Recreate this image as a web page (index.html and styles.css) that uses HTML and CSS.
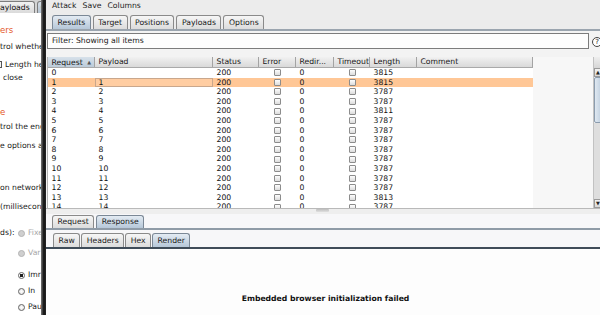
FILE: index.html
```html
<!DOCTYPE html>
<html lang="en">
<head>
    <meta charset="UTF-8">
    <meta name="viewport" content="width=device-width, initial-scale=1.0">
    <title>Intruder attack</title>
    <link rel="stylesheet" href="styles.css">
</head>
<body>
    <div class="desk">
        <div class="back">
            <div class="back-tabs">
                <span class="btab">ayloads</span>
                <span class="btab btab-blue">C</span>
            </div>
            <div class="back-body">
                <div class="bl sect first">ers</div>
                <div class="bl g7">trol whethe</div>
                <div class="bl g8"><i class="bcb"></i>Length hea</div>
                <div class="bl g3 in">close</div>
                <div class="bl sect g24">e</div>
                <div class="bl g5">trol the eng</div>
                <div class="bl g9">e options a</div>
                <div class="bl g32">on network</div>
                <div class="bl g9">(millisecon</div>
                <div class="bl g16 opt"><span class="lbl">ds):</span><i class="rad off"></i><span class="dim">Fixe</span></div>
                <div class="bl g10 opt"><span class="lbl"></span><i class="rad off"></i><span class="dim">Var</span></div>
                <div class="bl g12 opt"><span class="lbl"></span><i class="rad on"></i>Imr</div>
                <div class="bl g6 opt"><span class="lbl"></span><i class="rad"></i>In</div>
                <div class="bl g6 opt"><span class="lbl"></span><i class="rad"></i>Pau</div>
            </div>
        </div>
        <div class="edge"></div>

        <div class="win">
            <div class="menu">
                <span>Attack</span>
                <span>Save</span>
                <span>Columns</span>
            </div>

            <div class="tabs tabs-top">
                <span class="tab active">Results</span>
                <span class="tab">Target</span>
                <span class="tab">Positions</span>
                <span class="tab">Payloads</span>
                <span class="tab">Options</span>
            </div>

            <div class="filter-row">
                <div class="filter">Filter: Showing all items</div>
                <span class="help">?</span>
            </div>

            <div class="grid-wrap">
                <div class="table">
                    <div class="row head">
                        <span class="sorted">Request <b class="arrow">&#9650;</b></span>
                        <span>Payload</span>
                        <span>Status</span>
                        <span>Error</span>
                        <span>Redir...</span>
                        <span>Timeout</span>
                        <span>Length</span>
                        <span>Comment</span>
                    </div>
                    <div class="row"><span>0</span><span></span><span>200</span><span class="c"><i class="cb"></i></span><span>0</span><span class="c"><i class="cb"></i></span><span>3815</span><span></span></div>
                    <div class="row picked"><span>1</span><span class="focus">1</span><span>200</span><span class="c"><i class="cb"></i></span><span>0</span><span class="c"><i class="cb"></i></span><span>3815</span><span></span></div>
                    <div class="row"><span>2</span><span>2</span><span>200</span><span class="c"><i class="cb"></i></span><span>0</span><span class="c"><i class="cb"></i></span><span>3787</span><span></span></div>
                    <div class="row"><span>3</span><span>3</span><span>200</span><span class="c"><i class="cb"></i></span><span>0</span><span class="c"><i class="cb"></i></span><span>3787</span><span></span></div>
                    <div class="row"><span>4</span><span>4</span><span>200</span><span class="c"><i class="cb"></i></span><span>0</span><span class="c"><i class="cb"></i></span><span>3811</span><span></span></div>
                    <div class="row"><span>5</span><span>5</span><span>200</span><span class="c"><i class="cb"></i></span><span>0</span><span class="c"><i class="cb"></i></span><span>3787</span><span></span></div>
                    <div class="row"><span>6</span><span>6</span><span>200</span><span class="c"><i class="cb"></i></span><span>0</span><span class="c"><i class="cb"></i></span><span>3787</span><span></span></div>
                    <div class="row"><span>7</span><span>7</span><span>200</span><span class="c"><i class="cb"></i></span><span>0</span><span class="c"><i class="cb"></i></span><span>3787</span><span></span></div>
                    <div class="row"><span>8</span><span>8</span><span>200</span><span class="c"><i class="cb"></i></span><span>0</span><span class="c"><i class="cb"></i></span><span>3787</span><span></span></div>
                    <div class="row"><span>9</span><span>9</span><span>200</span><span class="c"><i class="cb"></i></span><span>0</span><span class="c"><i class="cb"></i></span><span>3787</span><span></span></div>
                    <div class="row"><span>10</span><span>10</span><span>200</span><span class="c"><i class="cb"></i></span><span>0</span><span class="c"><i class="cb"></i></span><span>3787</span><span></span></div>
                    <div class="row"><span>11</span><span>11</span><span>200</span><span class="c"><i class="cb"></i></span><span>0</span><span class="c"><i class="cb"></i></span><span>3787</span><span></span></div>
                    <div class="row"><span>12</span><span>12</span><span>200</span><span class="c"><i class="cb"></i></span><span>0</span><span class="c"><i class="cb"></i></span><span>3787</span><span></span></div>
                    <div class="row"><span>13</span><span>13</span><span>200</span><span class="c"><i class="cb"></i></span><span>0</span><span class="c"><i class="cb"></i></span><span>3813</span><span></span></div>
                    <div class="row"><span>14</span><span>14</span><span>200</span><span class="c"><i class="cb"></i></span><span>0</span><span class="c"><i class="cb"></i></span><span>3787</span><span></span></div>
                </div>
                <div class="blank"></div>
                <div class="vscroll">
                    <div class="sb-corner"></div>
                    <div class="sb-btn">&#9650;</div>
                    <div class="sb-thumb"></div>
                    <div class="sb-track"></div>
                    <div class="sb-btn">&#9660;</div>
                </div>
            </div>

            <div class="split"><span class="grip"></span></div>

            <div class="lower">
                <div class="tabs tabs-msg">
                    <span class="tab">Request</span>
                    <span class="tab active">Response</span>
                </div>
                <div class="tabs tabs-view">
                    <span class="tab">Raw</span>
                    <span class="tab">Headers</span>
                    <span class="tab">Hex</span>
                    <span class="tab active">Render</span>
                </div>
                <div class="render">Embedded browser initialization failed</div>
            </div>
        </div>
    </div>
</body>
</html>
```

FILE: styles.css
```css
* {
    box-sizing: border-box;
}

body {
    margin: 0;
    width: 600px;
    height: 315px;
    overflow: hidden;
    background: #fff;
    color: #111;
    font-family: "DejaVu Sans", sans-serif;
    font-size: 7.7px;
    line-height: 10px;
}

.desk {
    display: flex;
    width: 605px;
    height: 315px;
}

/* window behind, mostly covered */
.back {
    width: 41px;
    flex: none;
    overflow: hidden;
    white-space: nowrap;
    background: #fff;
}

.back-tabs {
    height: 13px;
    display: flex;
    align-items: flex-end;
    gap: 2px;
    background: #d4d4d4;
}

.btab {
    height: 12px;
    margin-left: -3px;
    padding: 1px 4px 0 2px;
    border: 1px solid #7d7d7d;
    border-bottom: none;
    border-radius: 0 3px 0 0;
    background: linear-gradient(#f2f2f2, #dadada);
    line-height: 10px;
}

.btab-blue {
    margin-left: 0;
    padding-left: 3px;
    border-radius: 3px 0 0 0;
    background: linear-gradient(#d6dfe8, #b5c3d1);
}

.back-body {
    padding-top: 12px;
}

.bl {
    height: 10px;
    color: #1b1b1b;
}

.sect {
    color: #e4592a;
    font-size: 8.6px;
}

.g3 { margin-top: 3px; }
.g5 { margin-top: 5px; }
.g6 { margin-top: 6px; }
.g7 { margin-top: 7px; }
.g8 { margin-top: 8px; }
.g9 { margin-top: 9px; }
.g10 { margin-top: 10px; }
.g12 { margin-top: 12px; }
.g16 { margin-top: 16px; }
.g24 { margin-top: 24px; }
.g32 { margin-top: 32px; }

.in {
    padding-left: 3px;
}

.bcb {
    display: inline-block;
    width: 7px;
    height: 7px;
    margin: 0 3px 0 -5px;
    vertical-align: -1px;
    border: 1px solid #555;
    background: #f4f4f4;
}

.opt {
    display: flex;
    align-items: center;
}

.lbl {
    width: 18px;
    flex: none;
}

.rad {
    width: 7px;
    height: 7px;
    margin-right: 3px;
    flex: none;
    border: 1px solid #666;
    border-radius: 50%;
    background: radial-gradient(#fff, #dedede);
}

.rad.off {
    border-color: #b4b4b4;
    background: #cfcfcf;
}

.rad.on {
    background: radial-gradient(#222 0 1.6px, #fff 2px, #dedede);
}

.dim {
    color: #a6a6a6;
}

.edge {
    width: 5px;
    flex: none;
    background: linear-gradient(to right, #777, #141414 55%, #262626);
}

/* attack window */
.win {
    width: 559px;
    flex: none;
    display: flex;
    flex-direction: column;
    background: #ececec;
}

.menu {
    height: 12px;
    padding: 1px 0 0 6px;
    display: flex;
    gap: 6px;
    color: #1d1d1d;
}

.tabs {
    display: flex;
    align-items: flex-end;
}

.tab {
    padding: 0 4.5px;
    border: 1px solid #8a8a8a;
    border-bottom: none;
    border-radius: 3px 3px 0 0;
    background: linear-gradient(#f6f6f6, #dcdcdc);
    color: #1a1a1a;
    line-height: 12px;
}

.tab.active {
    border-color: #7b8896;
    background: linear-gradient(#e3ebf3, #b6c7d8);
}

.tabs-top {
    height: 19px;
    padding-left: 6px;
    gap: 2px;
    border-bottom: 2px solid #9ba5af;
}

.tabs-top .tab {
    height: 14px;
    line-height: 13px;
}

.filter-row {
    height: 24px;
    padding: 2px 0 0 1px;
    display: flex;
    align-items: flex-start;
    gap: 3px;
    background: #f3f3f3;
}

.filter {
    width: 542px;
    height: 16px;
    padding: 2px 0 0 4px;
    border: 1px solid #7c7c7c;
    background: #fdfdfd;
    color: #1a1a1a;
}

.help {
    width: 10px;
    height: 10px;
    margin-top: 4px;
    border: 1px solid #444;
    border-radius: 50%;
    background: #fff;
    font-size: 7px;
    line-height: 8px;
    text-align: center;
}

.grid-wrap {
    height: 153px;
    padding: 2px 0 0 1px;
    display: flex;
    overflow: hidden;
    background: #f3f3f3;
}

.table {
    width: 486px;
    flex: none;
    border-left: 1px solid #b5b5b5;
    background: #fff;
}

.row {
    display: grid;
    grid-template-columns: 47px 118px 46px 37px 38px 36px 47px 116px;
    height: 9.6px;
    line-height: 9.6px;
    white-space: nowrap;
}

.row span {
    padding-left: 3.5px;
    overflow: hidden;
}

.row .c {
    padding: 0;
    display: flex;
    justify-content: center;
    align-items: center;
}

.head {
    height: 11px;
    line-height: 10px;
    background: linear-gradient(#f1f1f1, #d9d9d9);
    border-bottom: 1px solid #a9a9a9;
    color: #1a1a1a;
}

.head span {
    border-right: 1px solid #a3a3a3;
}

.head .sorted {
    background: linear-gradient(#d7e1ea, #bccbd9);
}

.arrow {
    margin-left: 2px;
    font-weight: normal;
    font-size: 5px;
    color: #555;
    vertical-align: 1px;
}

.cb {
    width: 7px;
    height: 7px;
    border: 1px solid #8c8c8c;
    border-radius: 1px;
    background: linear-gradient(#fdfdfd, #dcdcdc);
}

.picked {
    background: #ffc796;
}

.picked .focus {
    box-shadow: inset 0 0 0 1px #c9a78c;
    background: #ffcda2;
}

.blank {
    flex: 1;
    background: #f7f7f7;
}

.vscroll {
    width: 12px;
    flex: none;
    display: flex;
    flex-direction: column;
    border-left: 1px solid #c2c2c2;
}

.sb-corner {
    height: 11px;
    background: linear-gradient(#eeeeee, #d6d6d6);
}

.sb-btn {
    height: 9px;
    background: linear-gradient(#f3f3f3, #d8d8d8);
    border: 1px solid #9a9a9a;
    font-size: 5px;
    line-height: 7px;
    text-align: left;
    padding-left: 1px;
    color: #222;
}

.sb-thumb {
    height: 46px;
    border: 1px solid #8b9cae;
    border-radius: 2px;
    background: linear-gradient(to right, #dfe8f1, #b3c5d7);
}

.sb-track {
    flex: 1;
    background: #dedede;
}

.split {
    height: 6px;
    display: flex;
    justify-content: center;
    border-top: 1px solid #b9b9b9;
    background: #eeeeee;
}

.grip {
    width: 13px;
    height: 3px;
    margin: 0 0 0 -6px;
    border-radius: 1px;
    background: linear-gradient(#bdbdbd, #e0e0e0);
}

.lower {
    flex: 1;
    display: flex;
    flex-direction: column;
    background: #f7f7f9;
}

.tabs-msg {
    height: 16px;
    padding-left: 6px;
    gap: 2px;
    border-bottom: 2px solid #8f9ba7;
}

.tabs-msg .tab {
    height: 13px;
}

.tabs-view {
    height: 19px;
    padding-left: 7px;
    gap: 1px;
    border-bottom: 2px solid #3f4c59;
}

.tabs-view .tab {
    height: 14px;
    line-height: 13px;
}

.render {
    flex: 1;
    padding-top: 45px;
    background: #fdfdfd;
    text-align: center;
    font-weight: bold;
    color: #111;
}
```
